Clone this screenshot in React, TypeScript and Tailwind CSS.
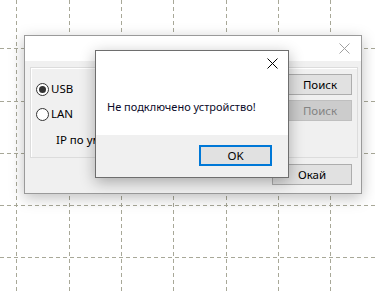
const font = "font-['Segoe_UI','Noto_Sans','Liberation_Sans',sans-serif]";

function Grid() {
  const xs = [16, 69, 121, 173, 226, 278, 330];
  const ys = [-4, 48, 101, 153, 205, 257];
  return (
    <svg className="absolute inset-0" width="375" height="292">
      {xs.map((x) => (
        <line key={'x' + x} x1={x + 0.5} y1={0} x2={x + 0.5} y2={292} stroke="#a8a898" strokeDasharray="4 3" />
      ))}
      {ys.map((y) => (
        <line key={'y' + y} x1={0} y1={y + 0.5} x2={375} y2={y + 0.5} stroke="#a8a898" strokeDasharray="4 3" />
      ))}
    </svg>
  );
}

function CloseIcon({color}: {color: string}) {
  return (
    <svg width="11" height="11" viewBox="0 0 11 11">
      <path d="M0.5 0.5 L10.5 10.5 M10.5 0.5 L0.5 10.5" stroke={color} strokeWidth="1" fill="none" />
    </svg>
  );
}

function Radio({checked, label}: {checked?: boolean; label: string}) {
  return (
    <div className="flex items-center gap-[2px] h-[14px]">
      <span className="w-[13px] h-[13px] rounded-full border border-[#333] bg-white flex items-center justify-center">
        {checked && <span className="w-[7px] h-[7px] rounded-full bg-[#333]" />}
      </span>
      <span className="text-[11.5px] text-black leading-none">{label}</span>
    </div>
  );
}

function WinButton({children, disabled, className = ''}: {children: React.ReactNode; disabled?: boolean; className?: string}) {
  return (
    <div
      className={
        'h-[21px] flex items-center justify-center border text-[11.5px] leading-none ' +
        (disabled ? 'bg-[#cccccc] border-[#bfbfbf] text-[#838383] ' : 'bg-[#e1e1e1] border-[#adadad] text-black ') +
        className
      }
    >
      {children}
    </div>
  );
}

export default function App() {
  return (
    <div className={`relative w-[375px] h-[292px] bg-white overflow-hidden ${font}`}>
      <Grid />

      {/* main window */}
      <div className="absolute left-[24px] top-[35px] w-[338px] h-[159px] border border-[#9a9a9a] bg-[#f0f0f0] shadow-[0_4px_14px_rgba(0,0,0,0.25)] flex flex-col">
        <div className="h-[25px] bg-white flex items-center justify-end pr-[11px]">
          <CloseIcon color="#a0a0a0" />
        </div>
        <div className="flex-1 flex flex-col pl-[5px] pr-[3px] pt-[6px]">
          <div className="h-[91px] border border-[#dcdcdc] shadow-[inset_1px_1px_0_#fff] flex justify-between pl-[5px] pr-[5px] pt-[6px]">
            <div className="flex flex-col pt-[8px]">
              <Radio checked label="USB" />
              <div className="h-[11px]" />
              <Radio label="LAN" />
              <div className="pl-[20px] pt-[13px] text-[11.5px] text-black leading-none whitespace-nowrap">IP по умолчанию</div>
            </div>
            <div className="flex flex-col gap-[5px]">
              <WinButton className="w-[64px]">Поиск</WinButton>
              <WinButton disabled className="w-[64px]">Поиск</WinButton>
            </div>
          </div>
          <div className="flex justify-end pt-[6px] pr-[6px]">
            <WinButton className="w-[80px]">Окай</WinButton>
          </div>
        </div>
      </div>

      {/* message box */}
      <div className="absolute left-[95px] top-[50px] w-[194px] h-[128px] border border-[#6e6e6e] bg-white shadow-[0_4px_14px_rgba(0,0,0,0.3)] flex flex-col">
        <div className="h-[84px] flex flex-col">
          <div className="h-[23px] flex items-center justify-end pr-[10px] pt-[1px]">
            <CloseIcon color="#000" />
          </div>
          <div className="pl-[11px] pt-[27px] text-[11px] text-[#0b0b2a] leading-none whitespace-nowrap">Не подключено устройство!</div>
        </div>
        <div className="flex-1 bg-[#f0f0f0] flex justify-end items-start pt-[10px] pr-[16px]">
          <div className="w-[73px] h-[21px] border-2 border-[#0078d7] bg-[#e1e1e1] flex items-center justify-center text-[11.5px] text-black leading-none">
            OK
          </div>
        </div>
      </div>
    </div>
  );
}
